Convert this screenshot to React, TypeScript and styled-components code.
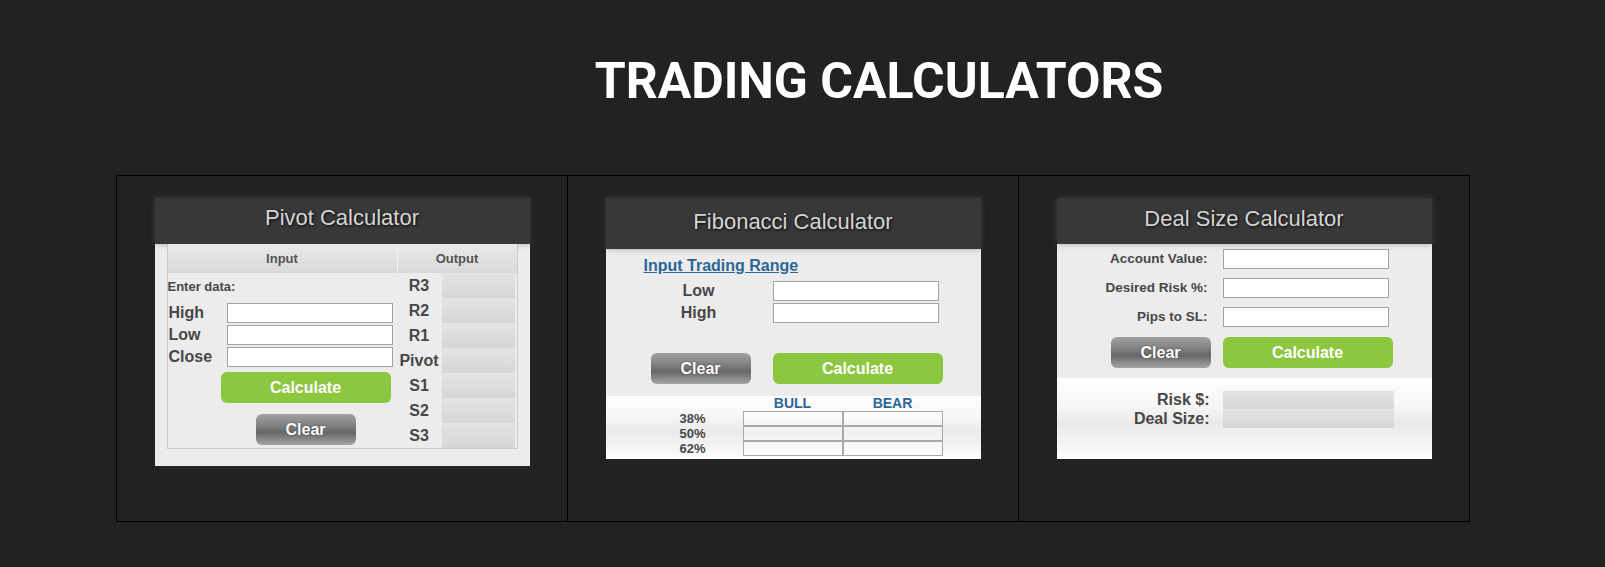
import React from 'react';
import styled, { createGlobalStyle } from 'styled-components';

const GlobalStyle = createGlobalStyle`
  body {
    margin: 0;
    background: #222222;
    font-family: "Liberation Sans", Arial, sans-serif;
  }
`;

const Page = styled.div`
  width: 1605px;
  height: 567px;
  overflow: hidden;
`;

const PageTitle = styled.h1`
  margin: 52px 0 0;
  padding-left: 153px;
  height: 58px;
  line-height: 58px;
  text-align: center;
  font-family: Roboto, "Liberation Sans", sans-serif;
  font-weight: 700;
  font-size: 50px;
  color: #ffffff;
`;

const CalcTable = styled.div`
  margin: 65px 0 0 116px;
  width: 1354px;
  height: 347px;
  box-sizing: border-box;
  border: 1px solid #000;
  display: grid;
  grid-template-columns: 450px 451px 1fr;
`;

const CalcCell = styled.div<{ first?: boolean }>`
  border-left: ${({ first }) => (first ? 'none' : '1px solid #000')};
  display: flex;
  justify-content: center;
  align-items: flex-start;
  padding-top: 22px;
`;

const Panel = styled.div`
  width: 375px;
  background: #ececec;
`;

const PanelHeader = styled.div<{ h: number; lh: number }>`
  height: ${({ h }) => h}px;
  line-height: ${({ lh }) => lh}px;
  background: #383838;
  box-shadow: 0 0 6px rgba(90, 90, 90, 0.45);
  text-align: center;
  font-size: 22px;
  color: #d4d4d4;
  text-shadow: 1px 1px 3px #0a0a0a;
`;

/* shared controls */

const Field = styled.input`
  box-sizing: border-box;
  width: 166px;
  height: 20px;
  margin: 0;
  border: 1px solid #a3a3a3;
  background: #fff;
  outline: none;
`;

const Button = styled.button<{ w: number }>`
  width: ${({ w }) => w}px;
  height: 31px;
  border: none;
  border-radius: 6px;
  padding: 0;
  font-family: "Liberation Sans", Arial, sans-serif;
  font-weight: 700;
  font-size: 16px;
  color: #fff;
  cursor: pointer;
`;

const GreenButton = styled(Button)`
  background: #8dc63f;
`;

const GreyButton = styled(Button)`
  background: linear-gradient(#a2a2a2 0%, #7e7e7e 40%, #676767 60%, #8e8e8e 85%, #a5a5a5 100%);
  text-shadow: 0 0 2px rgba(0, 0, 0, 0.45);
`;

const BoldLabel = styled.span<{ size: number }>`
  font-weight: 700;
  font-size: ${({ size }) => size}px;
  color: #474747;
`;

const OutputBox = styled.div`
  background: linear-gradient(#e3e4e4, #d5d6d6);
`;

const ResultsArea = styled.div`
  background: linear-gradient(#fdfdfd 0%, #f6f6f6 35%, #eaeaea 55%, #f4f4f4 80%, #fefefe 100%);
`;

/* pivot */

const PivotBody = styled.div`
  padding: 0 12px 17px;
`;

const PivotGrid = styled.div`
  border: 1px solid #cbcbcb;
  border-top: none;
  display: grid;
  grid-template-columns: 229px 1fr;
`;

const HeadCell = styled.div<{ divider?: boolean }>`
  height: 29px;
  line-height: 29px;
  text-align: center;
  font-weight: 700;
  font-size: 13px;
  color: #555;
  background: linear-gradient(#e9e9e9, #d8d9d9);
  border-left: ${({ divider }) => (divider ? '1px solid #f2f2f2' : 'none')};
`;

const InputColumn = styled.div`
  display: flex;
  flex-direction: column;
`;

const EnterData = styled.div`
  height: 26px;
  line-height: 28px;
  font-weight: 700;
  font-size: 13px;
  color: #474747;
  margin-bottom: 4px;
`;

const PivotRow = styled.div`
  display: grid;
  grid-template-columns: 58px 166px;
  height: 20px;
  line-height: 20px;
  margin-bottom: 2px;
  padding-left: 1px;
`;

const PivotButtons = styled.div`
  margin: 3px 0 0 53px;
  width: 170px;
  display: flex;
  flex-direction: column;
  align-items: center;
  gap: 11px;
`;

const OutputColumn = styled.div`
  display: flex;
  flex-direction: column;
`;

const OutRow = styled.div`
  display: grid;
  grid-template-columns: 45px 73px;
  height: 25px;
  line-height: 25px;
  text-align: center;
`;

/* fibonacci */

const FibTop = styled.div`
  padding: 7px 0 12px 38px;
`;

const RangeLink = styled.a`
  display: block;
  height: 20px;
  line-height: 20px;
  font-weight: 700;
  font-size: 16px;
  color: #2b6699;
  text-decoration: underline;
`;

const FibRows = styled.div`
  margin-top: 5px;
  display: flex;
  flex-direction: column;
  gap: 2px;
`;

const FibRow = styled.div`
  display: grid;
  grid-template-columns: 110px 166px;
  column-gap: 19px;
  height: 20px;
  line-height: 20px;
  text-align: center;
`;

const ButtonRow = styled.div<{ indent: number; gap: number; top: number }>`
  display: flex;
  gap: ${({ gap }) => gap}px;
  margin-top: ${({ top }) => top}px;
  padding-left: ${({ indent }) => indent}px;
`;

const FibResults = styled(ResultsArea)`
  padding: 0 0 3px 37px;
  display: grid;
  grid-template-columns: 100px 100px 100px;
`;

const ColHead = styled.div`
  height: 15px;
  line-height: 15px;
  text-align: center;
  font-weight: 700;
  font-size: 14px;
  color: #2b6699;
`;

const PctLabel = styled.div`
  height: 15px;
  line-height: 15px;
  text-align: center;
  font-weight: 700;
  font-size: 13px;
  color: #474747;
`;

const FibCell = styled.div`
  box-sizing: border-box;
  height: 15px;
  border: 1px solid #a9a9a9;
  background: rgba(255, 255, 255, 0.35);
`;

/* deal size */

const DealTop = styled.div`
  padding: 5px 0 10px;
`;

const DealRows = styled.div`
  display: flex;
  flex-direction: column;
  gap: 9px;
`;

const DealRow = styled.div`
  display: grid;
  grid-template-columns: 151px 166px;
  column-gap: 15px;
  height: 20px;
  line-height: 20px;
  text-align: right;
`;

const DealResults = styled(ResultsArea)`
  padding: 13px 0 31px;
  display: grid;
  grid-template-columns: 153px 171px;
  column-gap: 13px;
`;

const DealResultLabel = styled.div<{ h: number }>`
  height: ${({ h }) => h}px;
  line-height: ${({ h }) => h}px;
  text-align: right;
  font-weight: 700;
  font-size: 16px;
  color: #474747;
`;

const DealOutput = styled(OutputBox)<{ h: number }>`
  height: ${({ h }) => h}px;
`;

const pivotOutputs = ['R3', 'R2', 'R1', 'Pivot', 'S1', 'S2', 'S3'];

const PivotCalculator: React.FC = () => (
  <Panel>
    <PanelHeader h={46} lh={40}>Pivot Calculator</PanelHeader>
    <PivotBody>
      <PivotGrid>
        <HeadCell>Input</HeadCell>
        <HeadCell divider>Output</HeadCell>
        <InputColumn>
          <EnterData>Enter data:</EnterData>
          {['High', 'Low', 'Close'].map((name) => (
            <PivotRow key={name}>
              <BoldLabel size={16}>{name}</BoldLabel>
              <Field type="text" />
            </PivotRow>
          ))}
          <PivotButtons>
            <GreenButton w={170}>Calculate</GreenButton>
            <GreyButton w={100}>Clear</GreyButton>
          </PivotButtons>
        </InputColumn>
        <OutputColumn>
          {pivotOutputs.map((name) => (
            <OutRow key={name}>
              <BoldLabel size={16}>{name}</BoldLabel>
              <OutputBox />
            </OutRow>
          ))}
        </OutputColumn>
      </PivotGrid>
    </PivotBody>
  </Panel>
);

const FibonacciCalculator: React.FC = () => (
  <Panel>
    <PanelHeader h={51} lh={47}>Fibonacci Calculator</PanelHeader>
    <FibTop>
      <RangeLink href="#">Input Trading Range</RangeLink>
      <FibRows>
        {['Low', 'High'].map((name) => (
          <FibRow key={name}>
            <BoldLabel size={16}>{name}</BoldLabel>
            <Field type="text" />
          </FibRow>
        ))}
      </FibRows>
      <ButtonRow indent={7} gap={22} top={30}>
        <GreyButton w={100}>Clear</GreyButton>
        <GreenButton w={170}>Calculate</GreenButton>
      </ButtonRow>
    </FibTop>
    <FibResults>
      <div />
      <ColHead>BULL</ColHead>
      <ColHead>BEAR</ColHead>
      {['38%', '50%', '62%'].map((pct) => (
        <React.Fragment key={pct}>
          <PctLabel>{pct}</PctLabel>
          <FibCell />
          <FibCell />
        </React.Fragment>
      ))}
    </FibResults>
  </Panel>
);

const DealSizeCalculator: React.FC = () => (
  <Panel>
    <PanelHeader h={46} lh={42}>Deal Size Calculator</PanelHeader>
    <DealTop>
      <DealRows>
        {['Account Value:', 'Desired Risk %:', 'Pips to SL:'].map((name) => (
          <DealRow key={name}>
            <BoldLabel size={13.5}>{name}</BoldLabel>
            <Field type="text" />
          </DealRow>
        ))}
      </DealRows>
      <ButtonRow indent={54} gap={12} top={10}>
        <GreyButton w={100}>Clear</GreyButton>
        <GreenButton w={170}>Calculate</GreenButton>
      </ButtonRow>
    </DealTop>
    <DealResults>
      <DealResultLabel h={18}>Risk $:</DealResultLabel>
      <DealOutput h={18} />
      <DealResultLabel h={19}>Deal Size:</DealResultLabel>
      <DealOutput h={19} />
    </DealResults>
  </Panel>
);

const App: React.FC = () => (
  <Page>
    <GlobalStyle />
    <PageTitle>TRADING CALCULATORS</PageTitle>
    <CalcTable>
      <CalcCell first>
        <PivotCalculator />
      </CalcCell>
      <CalcCell>
        <FibonacciCalculator />
      </CalcCell>
      <CalcCell>
        <DealSizeCalculator />
      </CalcCell>
    </CalcTable>
  </Page>
);

export default App;
